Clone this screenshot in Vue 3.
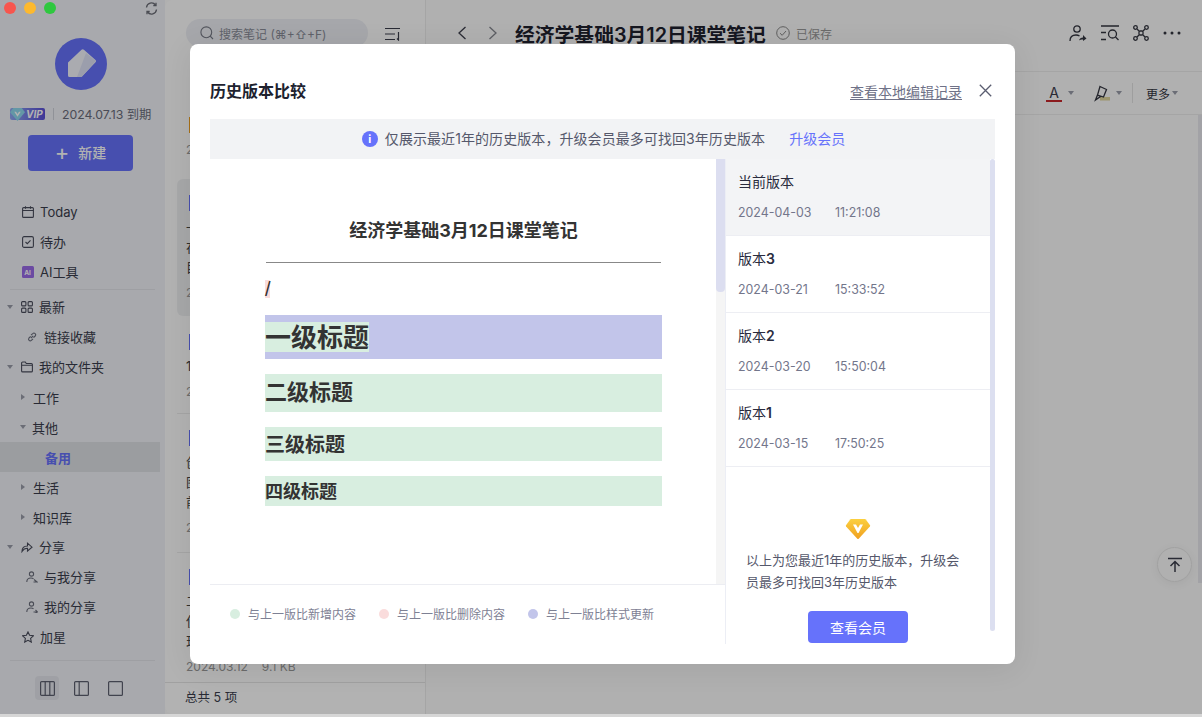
<script setup>
const navTop = [
  { label: 'Today', icon: 'cal' },
  { label: '待办', icon: 'todo' },
  { label: 'AI工具', icon: 'ai' },
]
const navTree = [
  { label: '最新', icon: 'grid', lv: 'top', caret: 'down' },
  { label: '链接收藏', icon: 'link', lv: 'leaf' },
  { label: '我的文件夹', icon: 'folder', lv: 'top', caret: 'down' },
  { label: '工作', lv: 'sub', caret: 'right' },
  { label: '其他', lv: 'sub', caret: 'down' },
  { label: '备用', lv: 'active' },
  { label: '生活', lv: 'sub', caret: 'right' },
  { label: '知识库', lv: 'sub', caret: 'right' },
  { label: '分享', icon: 'share', lv: 'top', caret: 'down' },
  { label: '与我分享', icon: 'userIn', lv: 'leaf' },
  { label: '我的分享', icon: 'userOut', lv: 'leaf' },
  { label: '加星', icon: 'star', lv: 'plain' },
]

// most of this column sits behind the dialog
const notes = [
  { color: '#f0a020', lines: [], date: '2024.04.03', title: '会议纪要' },
  { color: '#6672fb', lines: ['一级标题', '在这里', '目录'], date: '2024.04.03', title: '课堂笔记', on: true },
  { color: '#6672fb', lines: ['1月读书'], date: '2024.03.20', title: '读书清单' },
  { color: '#6672fb', lines: ['创建笔记', '图片', '前往'], date: '2024.03.15', title: '新手指南' },
  { color: '#6672fb', lines: ['二级标题', '使用模板', '现在开始'], date: '2024.03.12', size: '9.1 KB', title: '课程模板' },
]

const versions = [
  { name: '当前版本', date: '2024-04-03', time: '11:21:08', current: true },
  { name: '版本', num: '3', date: '2024-03-21', time: '15:33:52' },
  { name: '版本', num: '2', date: '2024-03-20', time: '15:50:04' },
  { name: '版本', num: '1', date: '2024-03-15', time: '17:50:25' },
]

const legend = [
  { text: '与上一版比新增内容', color: '#d8eee0' },
  { text: '与上一版比删除内容', color: '#fadcdc' },
  { text: '与上一版比样式更新', color: '#c2c5ea' },
]
</script>

<template>
  <div class="win">
    <aside class="side">
      <div class="lights">
        <i class="dot red"></i><i class="dot yellow"></i><i class="dot green"></i>
        <svg class="sync" width="13" height="13" viewBox="0 0 13 13" fill="none" stroke="#6a6c76" stroke-width="1.300">
          <path d="M1.500 5.500A5 5 0 0 1 10.500 3M11.500 7.500A5 5 0 0 1 2.500 10" />
          <path d="M11 .8v2.700H8.300M2 12.200V9.500h2.700" />
        </svg>
      </div>

      <svg class="logo" width="52" height="52" viewBox="0 0 52 52">
        <circle cx="26" cy="26" r="26" fill="#6672fb" />
        <path d="M13 24.500 26.500 11.800a1.800 1.800 0 0 1 2.400 0L40.500 22a1.500 1.500 0 0 1 0 2.200L27 38.500a1.500 1.500 0 0 1-1 .5H14.500a1.500 1.500 0 0 1-1.500-1.500z" fill="#f4f5fc" />
        <path d="M31 15 40.800 23 27 38.500a1.500 1.500 0 0 1-1 .5H22z" fill="#dfe2f6" />
      </svg>

      <div class="vip-row">
        <span class="vip">
          <svg class="vip-gem" width="15" height="13" viewBox="0 0 14 12">
            <path d="M3 0h8l3 4-7 8-7-8z" fill="#8fd8ee" />
            <path d="M4 3.500 7 8l3-4.500H8.400L7 5.600 5.600 3.500z" fill="#fff" />
          </svg>
          <span class="vip-text">VIP</span>
        </span>
        <i class="vip-sep"></i>
        <span class="vip-date">2024.07.13 到期</span>
      </div>

      <button class="new-btn" type="button"><span class="plus">+</span><span class="new-text">新建</span></button>

      <nav class="nav">
        <div v-for="n in navTop" :key="n.label" class="row lv-plain">
          <svg class="ic" width="12" height="12" viewBox="0 0 12 12" fill="none" stroke="#4a4d5c" stroke-width="1.100">
            <template v-if="n.icon === 'cal'">
              <rect x=".6" y="1.600" width="10.800" height="9.800" rx="1" />
              <path d="M.6 4.500h10.800M3.500.3v2.400M8.500.3v2.400" />
            </template>
            <template v-else-if="n.icon === 'todo'">
              <rect x=".6" y=".6" width="10.800" height="10.800" rx="1.500" />
              <path d="M3.500 6 5.300 7.700 8.500 4.300" />
            </template>
            <template v-else>
              <rect width="12" height="12" rx="1.500" fill="#9a6ae8" stroke="none" />
              <text x="2.200" y="8.500" class="ai-mark">AI</text>
            </template>
          </svg>
          <span>{{ n.label }}</span>
        </div>
        <hr class="side-line first" />
        <div v-for="n in navTree" :key="n.label" class="row" :class="'lv-' + n.lv">
          <i v-if="n.caret" class="caret" :class="n.caret"></i>
          <svg v-if="n.icon" class="ic" width="12" height="12" viewBox="0 0 12 12" fill="none" stroke="#4a4d5c" stroke-width="1.100">
            <template v-if="n.icon === 'grid'">
              <rect x=".6" y=".6" width="4.300" height="4.300" rx="1" />
              <rect x="7.100" y=".6" width="4.300" height="4.300" rx="1" />
              <rect x=".6" y="7.100" width="4.300" height="4.300" rx="1" />
              <rect x="7.100" y="7.100" width="4.300" height="4.300" rx="1" />
            </template>
            <template v-else-if="n.icon === 'link'">
              <path d="M5 7 7.200 4.800M4.700 5.300 3 7a1.700 1.700 0 0 0 2.400 2.400L7 7.800M5 4.200 6.700 2.600A1.700 1.700 0 0 1 9.200 5L7.500 6.700" stroke="#6b6e7c" />
            </template>
            <template v-else-if="n.icon === 'folder'">
              <path d="M.6 2a1 1 0 0 1 1-1h2.700l1 1.500h5.100a1 1 0 0 1 1 1v6.400a1 1 0 0 1-1 1H1.600a1 1 0 0 1-1-1zM.6 4.300h10.800" />
            </template>
            <template v-else-if="n.icon === 'share'">
              <path d="M1 10.500C1 6.800 3.200 5 6.500 5V2.200L11 6.200 6.500 10V7.300c-2.500 0-4.200 1-5.500 3.200z" />
            </template>
            <template v-else-if="n.icon === 'userIn'">
              <circle cx="5.500" cy="3" r="2.100" stroke="#6b6e7c" />
              <path d="M.8 11c0-2.600 1.700-4 4.200-4 1 0 1.800.2 2.500.7M8 8.500l3 2.500H7.500" stroke="#6b6e7c" />
            </template>
            <template v-else-if="n.icon === 'userOut'">
              <circle cx="5.500" cy="3" r="2.100" stroke="#6b6e7c" />
              <path d="M.8 11c0-2.600 1.700-4 4.200-4 1 0 1.800.2 2.500.7M7.500 11h3.800M9.500 9l2 2-2 1" stroke="#6b6e7c" />
            </template>
            <template v-else>
              <path d="M6 .9 7.600 4.300l3.700.5-2.700 2.600.7 3.700L6 9.300 2.700 11.100l.7-3.700L.7 4.800l3.700-.5z" />
            </template>
          </svg>
          <span>{{ n.label }}</span>
        </div>
      </nav>

      <hr class="side-line second" />
      <div class="views">
        <span class="view on">
          <svg width="15" height="15" viewBox="0 0 15 15" fill="none" stroke="#5d6070" stroke-width="1.200"><rect x=".6" y=".6" width="13.800" height="13.800" rx="1" /><path d="M5.200.6v13.800M9.800.6v13.800" /></svg>
        </span>
        <span class="view">
          <svg width="15" height="15" viewBox="0 0 15 15" fill="none" stroke="#5d6070" stroke-width="1.200"><rect x=".6" y=".6" width="13.800" height="13.800" rx="1" /><path d="M5.200.6v13.800" /></svg>
        </span>
        <span class="view">
          <svg width="15" height="15" viewBox="0 0 15 15" fill="none" stroke="#5d6070" stroke-width="1.200"><rect x=".6" y=".6" width="13.800" height="13.800" rx="1" /></svg>
        </span>
      </div>
    </aside>

    <section class="list">
      <div class="list-head">
        <div class="search">
          <svg width="14" height="14" viewBox="0 0 14 14" fill="none" stroke="#777a86" stroke-width="1.100"><circle cx="6.300" cy="6.300" r="5.400" /><path d="M10.200 10.200 13 13" /></svg>
          <span>搜索笔记 (⌘+⇧+F)</span>
        </div>
        <svg class="sort" width="16" height="14" viewBox="0 0 16 14" fill="none" stroke="#3c3e4c" stroke-width="1.200"><path d="M0 1.500h15M0 7h10M0 12.500h10M13.500 5v8l-1.500-1.500" /></svg>
      </div>
      <div class="cards">
        <article v-for="n in notes" :key="n.title" class="card" :class="{ on: n.on }">
          <div class="card-title"><i class="strip" :style="{ background: n.color }"></i>{{ n.title }}</div>
          <p v-for="l in n.lines" :key="l" class="card-line">{{ l }}</p>
          <div class="card-meta"><span>{{ n.date }}</span><span v-if="n.size">{{ n.size }}</span></div>
        </article>
      </div>
      <div class="list-foot">总共 5 项</div>
    </section>

    <section class="editor">
      <header class="ed-head">
        <svg width="10" height="14" viewBox="0 0 10 14" fill="none" stroke="#3d3f4c" stroke-width="1.300"><path d="M8.500 1 2 7l6.500 6" /></svg>
        <svg class="fwd" width="10" height="14" viewBox="0 0 10 14" fill="none" stroke="#85878f" stroke-width="1.300"><path d="M1.500 1 8 7l-6.500 6" /></svg>
        <h1 class="ed-title">经济学基础3月12日课堂笔记</h1>
        <svg class="saved-ic" width="14" height="14" viewBox="0 0 14 14" fill="none" stroke="#888" stroke-width="1"><circle cx="7" cy="7" r="6.300" /><path d="M4 7.200 6.200 9.300 10 5" /></svg>
        <span class="saved">已保存</span>
        <div class="ed-actions">
          <svg width="18" height="17" viewBox="0 0 18 17" fill="none" stroke="#33353f" stroke-width="1.300"><circle cx="8" cy="4" r="3.200" /><path d="M1 16c0-3.800 2.500-6 6-6 1.500 0 2.500.3 3.500 1" /><path d="M10 15.500c.5-2 2-3 4-3V10l3.500 3.500L14 16v-1.500c-1.500 0-3 0-4 1z" fill="#33353f" stroke="none" /></svg>
          <svg width="18" height="16" viewBox="0 0 18 16" fill="none" stroke="#33353f" stroke-width="1.300"><path d="M0 1h18M0 7.500h5M0 14.500h5" /><circle cx="11.500" cy="9" r="4" /><path d="m14.500 12 3 3" /></svg>
          <svg width="16" height="16" viewBox="0 0 16 16" fill="none" stroke="#33353f" stroke-width="1.300"><circle cx="2.500" cy="2.500" r="1.800" /><circle cx="13.500" cy="2.500" r="1.800" /><circle cx="2.500" cy="13.500" r="1.800" /><circle cx="13.500" cy="13.500" r="1.800" /><rect x="6" y="6" width="4" height="4" rx="1" /><path d="m4 4 2 2M12 4l-2 2M4 12l2-2M12 12l-2-2" /></svg>
          <svg width="18" height="4" viewBox="0 0 18 4" fill="#33353f"><circle cx="2" cy="2" r="1.500" /><circle cx="9" cy="2" r="1.500" /><circle cx="16" cy="2" r="1.500" /></svg>
        </div>
      </header>
      <div class="toolbar">
        <i class="tb-dash"></i>
        <span class="tb-a">A</span>
        <i class="caret down tb-c1"></i>
        <svg class="tb-hl" width="16" height="17" viewBox="0 0 16 17" fill="none" stroke="#33353f" stroke-width="1.300"><rect x="6" y="12" width="10" height="3.500" fill="#e0d69c" stroke="none" /><path d="M6 1.500 12.500 4.500 9.500 12 3.500 10z M1.500 15l2-5 3 1.500z" /></svg>
        <i class="caret down tb-c2"></i>
        <i class="tb-sep"></i>
        <span class="tb-more">更多</span>
        <i class="caret down tb-c3"></i>
      </div>
      <div class="ed-body">
        <span class="to-top">
          <svg width="16" height="16" viewBox="0 0 16 16" fill="none" stroke="#3c3e4c" stroke-width="1.500"><path d="M1 1.500h14M8 15V5M3.500 9l4.500-4.500L12.500 9" /></svg>
        </span>
        <i class="page-bar"></i>
      </div>
    </section>

    <div class="overlay">
      <div class="modal">
        <div class="m-head">
          <h2>历史版本比较</h2>
          <a class="m-local">查看本地编辑记录</a>
          <svg class="m-close" width="13" height="13" viewBox="0 0 13 13" fill="none" stroke="#5a5d70" stroke-width="1.300"><path d="m.8.8 11.400 11.400M12.200.8.8 12.200" /></svg>
        </div>
        <div class="banner">
          <span class="info">i</span>
          <span class="banner-text">仅展示最近1年的历史版本，升级会员最多可找回3年历史版本</span>
          <a class="up">升级会员</a>
        </div>
        <div class="m-body">
          <div class="compare">
            <div class="preview">
              <div class="doc">
                <div class="doc-title">经济学基础3月12日课堂笔记</div>
                <hr class="doc-hr" />
                <div class="doc-slash"><span>/</span></div>
                <div class="h h1"><span>一级标题</span></div>
                <div class="h h2">二级标题</div>
                <div class="h h3">三级标题</div>
                <div class="h h4">四级标题</div>
              </div>
              <div class="track"><i></i></div>
            </div>
            <div class="legend">
              <span v-for="l in legend" :key="l.text" class="leg">
                <i :style="{ background: l.color }"></i>{{ l.text }}
              </span>
            </div>
          </div>
          <div class="versions">
            <div class="v-col">
              <div v-for="v in versions" :key="v.date" class="ver" :class="{ current: v.current }">
                <div class="ver-name">{{ v.name }}<b v-if="v.num">{{ v.num }}</b></div>
                <div class="ver-time"><span class="ver-date">{{ v.date }}</span><span>{{ v.time }}</span></div>
              </div>
              <div class="promo">
                <svg width="26" height="22" viewBox="0 0 26 22">
                  <defs>
                    <linearGradient id="gold" x1="0" y1="0" x2="0" y2="1">
                      <stop offset="0" stop-color="#fbd040" />
                      <stop offset="1" stop-color="#f0a020" />
                    </linearGradient>
                  </defs>
                  <path d="M6 1h14a1 1 0 0 1 .8.400L25 7.300a1 1 0 0 1-.1 1.200L13.700 20.700a1 1 0 0 1-1.400 0L1.100 8.500A1 1 0 0 1 1 7.300L5.200 1.400A1 1 0 0 1 6 1z" fill="url(#gold)" />
                  <path d="M8 6.500h3L13 10l2-3.500h3L13.500 15h-1z" fill="#fff" />
                </svg>
                <p>以上为您最近1年的历史版本，升级会员最多可找回3年历史版本</p>
                <button type="button" class="promo-btn">查看会员</button>
              </div>
            </div>
            <i class="v-bar"></i>
          </div>
        </div>
      </div>
    </div>
  </div>
</template>

<style>
html, body {
  margin: 0;
  background: #d6d6d6;
}
</style>

<style scoped>
.win {
  position: relative;
  display: flex;
  width: 1202px;
  height: 714px;
  overflow: hidden;
  background: #fcfcfc;
  font-family: Inter, "Noto Sans CJK SC", sans-serif;
  font-size: 13px;
  color: #3a3d4c;
}

/* sidebar */
.side {
  flex: none;
  width: 165px;
  background: #f1f3f8;
  display: flex;
  flex-direction: column;
}
.lights {
  height: 16px;
  padding: 2px 0 0 4px;
  display: flex;
  gap: 8px;
}
.dot {
  position: relative;
  z-index: 20;
  width: 12px;
  height: 12px;
  border-radius: 50%;
}
.red { background: #f7564e; }
.yellow { background: #fdb92e; }
.green { background: #2fc83f; }
.sync { margin-left: 81px; }
.logo { margin: 20px 0 0 55px; display: block; }
.vip-row {
  display: flex;
  align-items: center;
  height: 14px;
  margin-top: 17px;
  padding-left: 10px;
}
.vip {
  display: flex;
  align-items: center;
  width: 35px;
  height: 12px;
  border-radius: 2px;
  background: linear-gradient(90deg, #8fa8f4, #5a4fd8);
}
.vip-gem { flex: none; }
.vip-text {
  font-size: 10px;
  font-weight: 700;
  font-style: italic;
  color: #fff;
  line-height: 12px;
  margin-left: 1px;
}
.vip-sep {
  width: 1px;
  height: 12px;
  background: #cfd2da;
  margin: 0 8px;
}
.vip-date { font-size: 12.300px; color: #6a6d7c; white-space: nowrap; }
.new-btn {
  width: 105px;
  height: 36px;
  margin: 14px 0 0 28px;
  padding: 0 0 2px;
  border: 0;
  border-radius: 4px;
  background: #6672fb;
  color: #fff;
  font: 500 14px Inter, "Noto Sans CJK SC", sans-serif;
  display: flex;
  align-items: center;
  justify-content: center;
}
.new-text { margin-bottom: 1px; }
.plus { font-size: 22px; font-weight: 400; line-height: 1; margin-right: 9px; }
.nav { width: 160px; margin-top: 26px; }
.row {
  display: flex;
  align-items: center;
  height: 30px;
  white-space: nowrap;
}
.row span { margin-bottom: 2px; }
.lv-plain:first-child span,
.lv-sub span,
.lv-active span { margin-bottom: 0; }
.lv-plain { padding-left: 22px; }
.lv-top { padding-left: 7px; }
.lv-leaf { padding-left: 26px; }
.lv-sub { padding-left: 20px; }
.lv-active {
  padding-left: 45px;
  background: #dfe1e6;
  color: #6672fb;
  font-weight: 600;
}
.ic { flex: none; margin-right: 6px; }
.ai-mark { font-size: 6.500px; font-weight: 700; fill: #fff; stroke: none; }
.caret { flex: none; width: 0; height: 0; }
.caret.down {
  border: 3.500px solid transparent;
  border-top: 4px solid #9a9da9;
  border-bottom: 0;
}
.caret.right {
  border: 3.500px solid transparent;
  border-left: 4px solid #9a9da9;
  border-right: 0;
}
.lv-top .caret { margin-right: 8px; }
.lv-sub .caret.down { margin-right: 6px; }
.lv-sub .caret.right { margin: 0 8px 0 1px; }
.side-line {
  border: 0;
  border-top: 1px solid #e2e4ea;
  margin: 0;
}
.side-line.first { margin: 2px 0 2px 10px; width: 145px; }
.side-line.second { margin: 8px 10px 0; }
.views {
  display: flex;
  align-items: center;
  padding: 15px 0 0 35px;
}
.view {
  width: 24px;
  height: 24px;
  margin-right: 10px;
  border-radius: 4px;
  display: flex;
  align-items: center;
  justify-content: center;
}
.view.on { background: #e4e6ec; }

/* note list */
.list {
  flex: none;
  width: 261px;
  box-sizing: border-box;
  border-right: 1px solid #ececec;
  border-radius: 8px 0 0 8px;
  background: #fff;
  display: flex;
  flex-direction: column;
  min-height: 0;
}
.list-head {
  flex: none;
  height: 101px;
  box-sizing: border-box;
  padding: 19px 0 0 21px;
  display: flex;
  align-items: flex-start;
}
.search {
  width: 182px;
  height: 28px;
  box-sizing: border-box;
  padding-left: 14px;
  border-radius: 14px;
  background: #eef0f5;
  display: flex;
  align-items: center;
  gap: 5px;
  font-size: 12px;
  color: #8a8d99;
}
.sort { margin: 8px 0 0 17px; }
.cards { flex: 1; min-height: 0; overflow: hidden; padding: 0 12px; }
.card {
  padding: 15px 9px 0;
  height: 123px;
  border-bottom: 1px solid #ececec;
  overflow: hidden;
  box-sizing: content-box;
}
.card:nth-child(1) { height: 63px; border-bottom: 0; }
.card:nth-child(2) { height: 122px; border-radius: 6px; border-bottom: 0; }
.card:nth-child(3) { padding-top: 17px; height: 80px; }
.card:nth-child(5) { border-bottom: 0; }
.card.on { background: #f0f1f3; }
.card-title {
  height: 18px;
  display: flex;
  align-items: center;
  padding-left: 3px;
  font-weight: 600;
  white-space: nowrap;
}
.strip { width: 12px; height: 16px; margin-right: 6px; flex: none; }
.card-line {
  margin: 0;
  height: 20px;
  line-height: 20px;
  color: #444;
  white-space: nowrap;
}
.card-title + .card-line { margin-top: 5px; }
.card-meta {
  display: flex;
  gap: 14px;
  margin-top: 6px;
  height: 20px;
  line-height: 20px;
  font-size: 12px;
  color: #9a9a9a;
}
.list-foot {
  flex: none;
  height: 32px;
  box-sizing: border-box;
  border-top: 1px solid #e6e6e6;
  padding-left: 20px;
  line-height: 29px;
  font-size: 12.500px;
  color: #3a3d4c;
}

/* editor */
.editor { flex: 1; min-width: 0; display: flex; flex-direction: column; }
.ed-head {
  flex: none;
  height: 71px;
  box-sizing: border-box;
  padding: 0 21px 5px 31px;
  display: flex;
  align-items: center;
}
.fwd { margin-left: 21px; }
.ed-title {
  margin: 0 0 0 17px;
  font-size: 19.800px;
  font-weight: 600;
  color: #20222f;
  white-space: nowrap;
}
.saved-ic { margin-left: 10px; }
.saved { margin-left: 6px; font-size: 12px; color: #999; }
.ed-actions {
  margin-left: auto;
  display: flex;
  align-items: center;
  gap: 14px;
}
.toolbar {
  flex: none;
  height: 44px;
  box-sizing: border-box;
  border-top: 1px solid #ececec;
  border-bottom: 1px solid #ececec;
  padding-right: 24px;
  display: flex;
  align-items: center;
  justify-content: flex-end;
}
.tb-dash { width: 4px; height: 1px; background: #333; margin-right: 31px; }
.tb-a {
  width: 16px;
  font-size: 14px;
  line-height: 15px;
  text-align: center;
  border-bottom: 2px solid #c8282c;
}
.tb-c1 { margin: 0 20px 0 6px; }
.tb-c2 { margin: 0 10px 0 6px; }
.tb-sep { width: 1px; height: 20px; background: #e2e2e2; margin-right: 13px; }
.tb-more { font-size: 12px; color: #33353f; }
.tb-c3 { margin-left: 2px; }
.ed-body { flex: 1; min-height: 0; display: flex; flex-direction: column; align-items: flex-end; position: relative; }
.to-top {
  position: absolute;
  left: 731px;
  top: 432px;
  width: 33px;
  height: 33px;
  border: 1px solid #e8e8e8;
  border-radius: 50%;
  background: #fcfcfc;
  box-shadow: 0 2px 10px rgba(0, 0, 0, 0.06);
  display: flex;
  align-items: center;
  justify-content: center;
}
.page-bar { width: 4px; height: 468px; background: #e8e8ee; }

/* modal */
.overlay {
  position: absolute;
  inset: 0;
  z-index: 10;
  background: rgba(0, 0, 0, 0.3);
  box-sizing: border-box;
  padding: 44px 0 0 190px;
}
.modal {
  width: 825px;
  height: 620px;
  box-sizing: border-box;
  padding: 0 20px;
  border-radius: 8px;
  background: #fff;
  box-shadow: 0 4px 30px rgba(0, 0, 0, 0.08);
  display: flex;
  flex-direction: column;
}
.m-head {
  flex: none;
  height: 75px;
  box-sizing: border-box;
  padding-top: 19px;
  display: flex;
  align-items: center;
}
.m-head h2 { margin: 0 0 2px; font-size: 16px; font-weight: 600; color: #20222f; }
.m-local {
  margin-left: auto;
  font-size: 14px;
  color: #6f7288;
  text-decoration: underline;
  text-underline-offset: 2px;
}
.m-close { margin: 0 3px 2px 17px; }
.banner {
  flex: none;
  height: 40px;
  padding-left: 2px;
  background: #f2f3f5;
  display: flex;
  align-items: center;
  justify-content: center;
  font-size: 14px;
  color: #55586b;
}
.banner-text { margin-bottom: 2px; letter-spacing: 0.07px; }
.info {
  width: 16px;
  height: 16px;
  margin-right: 7px;
  border-radius: 50%;
  background: #6672fb;
  color: #fff;
  font-size: 11px;
  font-weight: 700;
  line-height: 16px;
  text-align: center;
}
.up { margin: 0 0 2px 24px; color: #6672fb; }
.m-body { flex: none; height: 485px; display: flex; }
.compare { flex: none; width: 516px; display: flex; flex-direction: column; border-right: 1px solid #eceef5; box-sizing: border-box; }
.preview { flex: none; height: 425px; display: flex; border-bottom: 1px solid #ecedf2; box-sizing: content-box; }
.doc { flex: 1; padding: 60px 54px 0 55px; min-width: 0; color: #333; }
.doc-title {
  height: 24px;
  line-height: 24px;
  text-align: center;
  font-size: 18px;
  font-weight: 700;
}
.doc-hr { border: 0; border-top: 1px solid #888; margin: 19px 1px 0; }
.doc-slash { margin-top: 17px; height: 18px; }
.doc-slash span {
  display: block;
  width: 5px;
  height: 18px;
  background: #fadcdc;
  font-family: "Liberation Sans", sans-serif;
  font-size: 20px;
  line-height: 18px;
}
.h { font-weight: 700; background: #d8eee0; margin-top: 15px; display: flex; align-items: center; box-sizing: border-box; }
.h1 { height: 44px; margin-top: 17px; background: #c2c5ea; font-size: 26px; }
.h1 span { background: #d8eee0; height: 30px; line-height: 32px; }
.h2 { height: 38px; font-size: 22px; padding-bottom: 7px; }
.h3 { height: 34px; font-size: 20px; padding-bottom: 1px; }
.h4 { height: 30px; font-size: 18px; padding-bottom: 3px; }
.track { flex: none; width: 9px; background: #f5f5f5; }
.track i { display: block; height: 133px; border-radius: 0 0 4px 4px; background: #dcdef0; }
.legend {
  flex: 1;
  display: flex;
  align-items: center;
  padding: 0 0 2px 20px;
  font-size: 12px;
  color: #7e8194;
  white-space: nowrap;
}
.leg { display: flex; align-items: center; margin-right: 23px; }
.leg i { width: 10px; height: 10px; border-radius: 50%; margin-right: 8px; }
.versions { flex: 1; min-width: 0; display: flex; }
.v-col { flex: 1; min-width: 0; display: flex; flex-direction: column; }
.ver {
  height: 76px;
  box-sizing: content-box;
  border-bottom: 1px solid #edeef3;
  padding-left: 12px;
}
.ver.current { background: #f3f4f6; }
.ver-name { padding-top: 13px; line-height: 20px; font-size: 14px; color: #2a2c3e; }
.ver-name b { font-weight: 600; }
.ver-time {
  margin-top: 11px;
  display: flex;
  line-height: 20px;
  font-size: 12.400px;
  color: #73768b;
}
.ver-date { width: 97px; }
.promo {
  flex: 1;
  display: flex;
  flex-direction: column;
  align-items: center;
  padding-top: 51px;
}
.promo p {
  margin: 9px 0 0;
  width: 224px;
  font-size: 13px;
  line-height: 22px;
  color: #55586b;
}
.promo-btn {
  width: 100px;
  height: 32px;
  margin-top: 18px;
  padding-bottom: 2px;
  border: 0;
  border-radius: 4px;
  background: #6672fb;
  color: #fff;
  font: 14px Inter, "Noto Sans CJK SC", sans-serif;
}
.v-bar {
  flex: none;
  width: 5px;
  height: 472px;
  border-radius: 3px;
  background: #dcdff0;
}
</style>
